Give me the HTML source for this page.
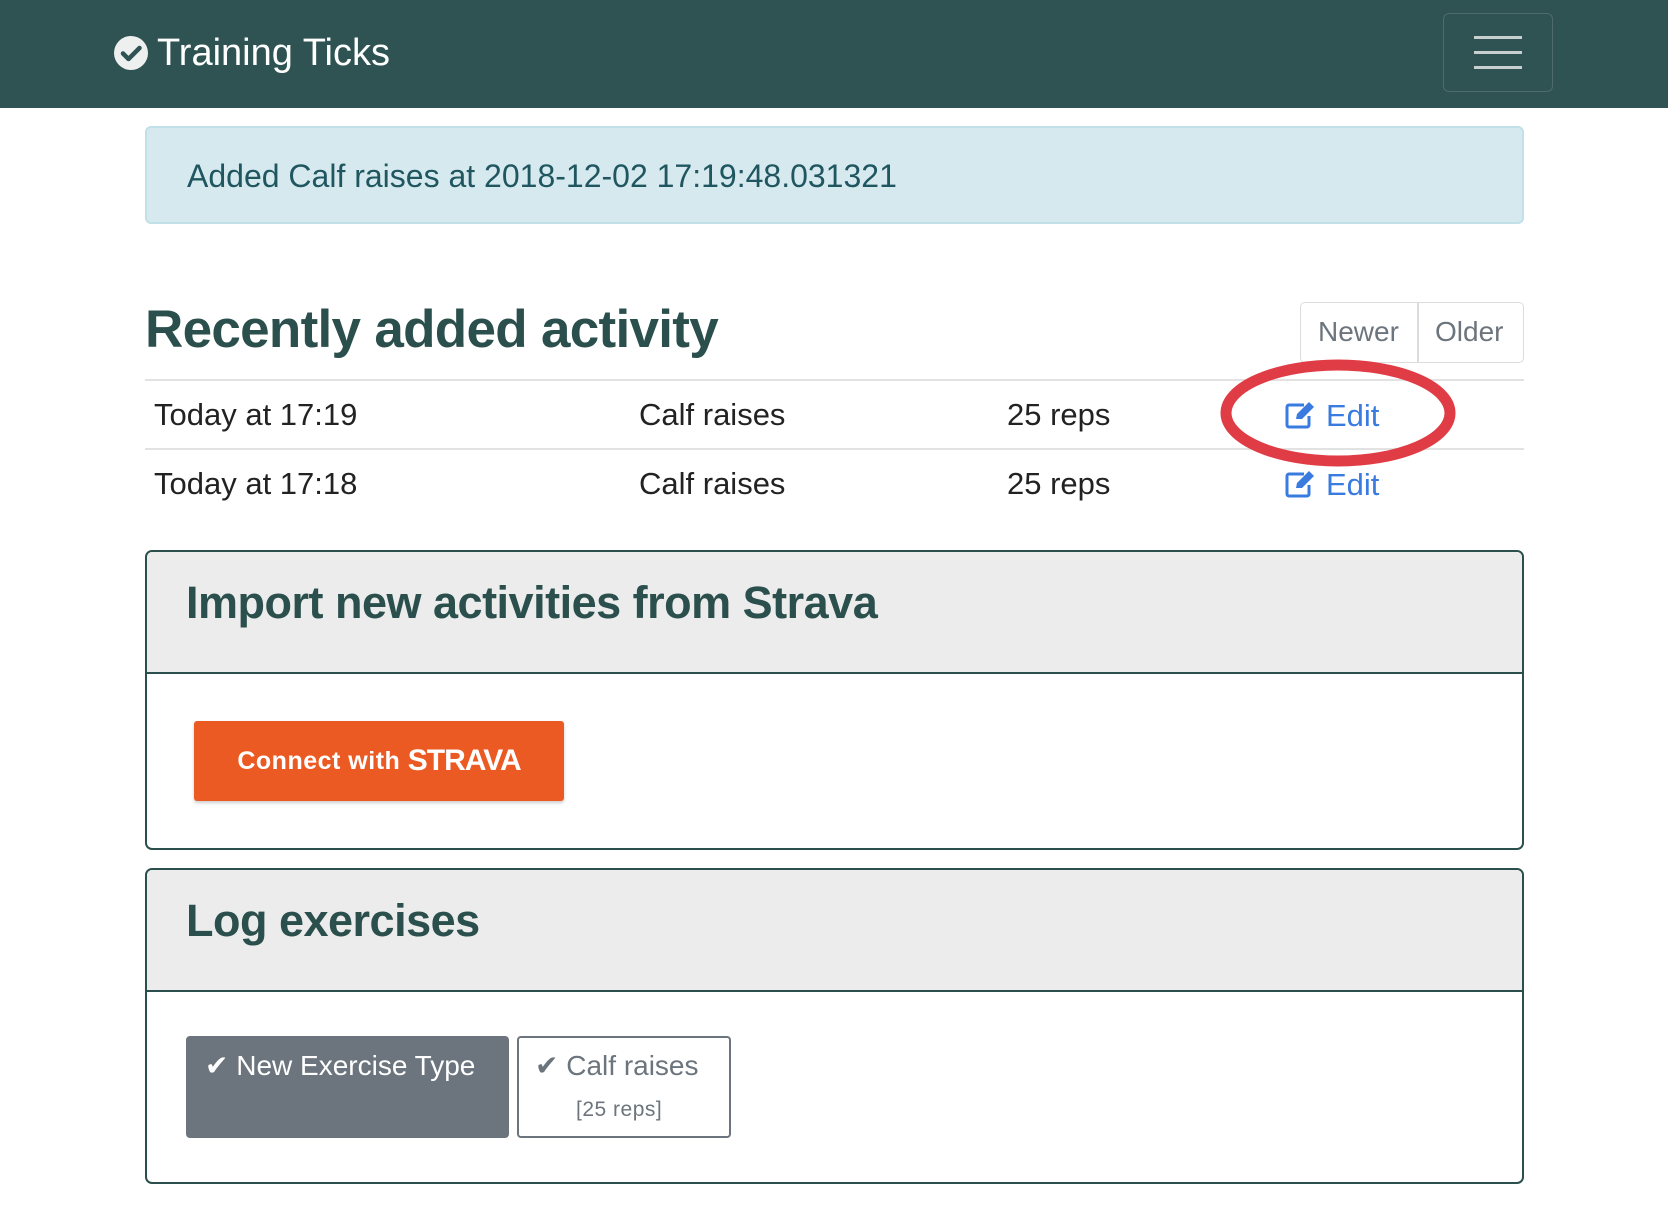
<!DOCTYPE html>
<html><head><meta charset="utf-8"><style>
*{box-sizing:border-box;margin:0;padding:0}
body{width:1668px;height:1225px;background:#fff;font-family:"Liberation Sans",sans-serif;position:relative;overflow:hidden;color:#222}
.a{position:absolute;white-space:nowrap}
.nav{left:0;top:0;width:1668px;height:108px;background:#2e5352}
.cent{display:flex;align-items:center}
</style></head><body>
<div class="a nav"></div>
<svg class="a" style="left:114px;top:36px" width="34" height="34" viewBox="0 0 34 34"><circle cx="17" cy="17" r="17" fill="#eef0ef"/><path d="M9 17.5l5.5 5.5L25.5 12" stroke="#2e5352" stroke-width="4.5" fill="none" stroke-linecap="round" stroke-linejoin="round"/></svg>
<div class="a" style="left:157px;top:31px;font-size:38px;line-height:44px;color:#fff">Training Ticks</div>
<div class="a" style="left:1443px;top:13px;width:110px;height:79px;border:1.5px solid rgba(255,255,255,.15);border-radius:6px"></div>
<div class="a" style="left:1474px;top:36px;width:48px;height:3px;background:#c8d0cf"></div>
<div class="a" style="left:1474px;top:51px;width:48px;height:3px;background:#c8d0cf"></div>
<div class="a" style="left:1474px;top:66px;width:48px;height:3px;background:#c8d0cf"></div>

<div class="a" style="left:145px;top:126px;width:1379px;height:98px;background:#d6e9ef;border:2px solid #c2e0e7;border-radius:6px"></div>
<div class="a" style="left:187px;top:157px;font-size:32px;line-height:38px;color:#1f5660">Added Calf raises at 2018-12-02 17:19:48.031321</div>

<div class="a" style="left:145px;top:298px;font-size:53px;line-height:64px;font-weight:bold;color:#2a4f4c;letter-spacing:-0.7px">Recently added activity</div>
<div class="a" style="left:1300px;top:302px;width:224px;height:61px;border:1.5px solid #dcdcdc;border-radius:5px"></div>
<div class="a" style="left:1417px;top:302px;width:1.5px;height:61px;background:#dcdcdc"></div>
<div class="a" style="left:1318px;top:315px;font-size:28px;line-height:34px;color:#6c757d">Newer</div>
<div class="a" style="left:1435px;top:315px;font-size:28px;line-height:34px;color:#6c757d">Older</div>

<div class="a" style="left:145px;top:379px;width:1379px;height:2px;background:#e2e2e2"></div>
<div class="a" style="left:145px;top:448px;width:1379px;height:2px;background:#e2e2e2"></div>
<div class="a" style="left:154px;top:396px;font-size:31px;line-height:38px">Today at 17:19</div>
<div class="a" style="left:639px;top:396px;font-size:31px;line-height:38px">Calf raises</div>
<div class="a" style="left:1007px;top:396px;font-size:31px;line-height:38px">25 reps</div>
<div class="a" style="left:154px;top:465px;font-size:31px;line-height:38px">Today at 17:18</div>
<div class="a" style="left:639px;top:465px;font-size:31px;line-height:38px">Calf raises</div>
<div class="a" style="left:1007px;top:465px;font-size:31px;line-height:38px">25 reps</div>
<svg class="a" style="left:1284px;top:400px" width="32" height="30" viewBox="0 0 32 30"><path d="M20 5H5a2 2 0 0 0-2 2v18a2 2 0 0 0 2 2h18a2 2 0 0 0 2-2V16" stroke="#3a7be0" stroke-width="3" fill="none"/><path d="M12 19l1-5L25 2l5 5-12 12z" fill="#3a7be0"/></svg>
<div class="a" style="left:1326px;top:397px;font-size:31px;line-height:38px;color:#3a7be0">Edit</div>
<svg class="a" style="left:1284px;top:469px" width="32" height="30" viewBox="0 0 32 30"><path d="M20 5H5a2 2 0 0 0-2 2v18a2 2 0 0 0 2 2h18a2 2 0 0 0 2-2V16" stroke="#3a7be0" stroke-width="3" fill="none"/><path d="M12 19l1-5L25 2l5 5-12 12z" fill="#3a7be0"/></svg>
<div class="a" style="left:1326px;top:466px;font-size:31px;line-height:38px;color:#3a7be0">Edit</div>
<svg class="a" style="left:1215px;top:356px" width="246" height="114"><ellipse cx="123" cy="57" rx="112" ry="48" stroke="#e03c45" stroke-width="11" fill="none"/></svg>

<div class="a" style="left:145px;top:550px;width:1379px;height:300px;border:2px solid #2a4f4c;border-radius:7px;overflow:hidden">
<div style="height:122px;background:#ececec;border-bottom:2px solid #2a4f4c"></div></div>
<div class="a" style="left:186px;top:576px;font-size:45px;line-height:54px;font-weight:bold;color:#2a4f4c;letter-spacing:-0.5px">Import new activities from Strava</div>
<div class="a cent" style="left:194px;top:721px;width:370px;height:80px;background:#ec5a24;border-radius:3px;box-shadow:0 2px 3px rgba(0,0,0,.2);justify-content:center;color:#fff;font-size:25px;font-weight:bold"><span style="letter-spacing:0.5px">Connect with&nbsp;</span><span style="font-size:30px;font-weight:900;letter-spacing:-1px">STRAVA</span></div>

<div class="a" style="left:145px;top:868px;width:1379px;height:316px;border:2px solid #2a4f4c;border-radius:7px;overflow:hidden">
<div style="height:122px;background:#ececec;border-bottom:2px solid #2a4f4c"></div></div>
<div class="a" style="left:186px;top:894px;font-size:45px;line-height:54px;font-weight:bold;color:#2a4f4c;letter-spacing:-0.5px">Log exercises</div>
<div class="a" style="left:186px;top:1036px;width:323px;height:102px;background:#6c757d;border-radius:4px"></div>
<div class="a" style="left:205px;top:1049px;font-size:28px;line-height:34px;color:#fff">✔ New Exercise Type</div>
<div class="a" style="left:517px;top:1036px;width:214px;height:102px;border:2px solid #6c757d;border-radius:4px"></div>
<div class="a" style="left:535px;top:1049px;font-size:28px;line-height:34px;color:#6c757d">✔ Calf raises</div>
<div class="a" style="left:576px;top:1097px;font-size:21px;line-height:26px;color:#6c757d;letter-spacing:0.5px">[25 reps]</div>
</body></html>
